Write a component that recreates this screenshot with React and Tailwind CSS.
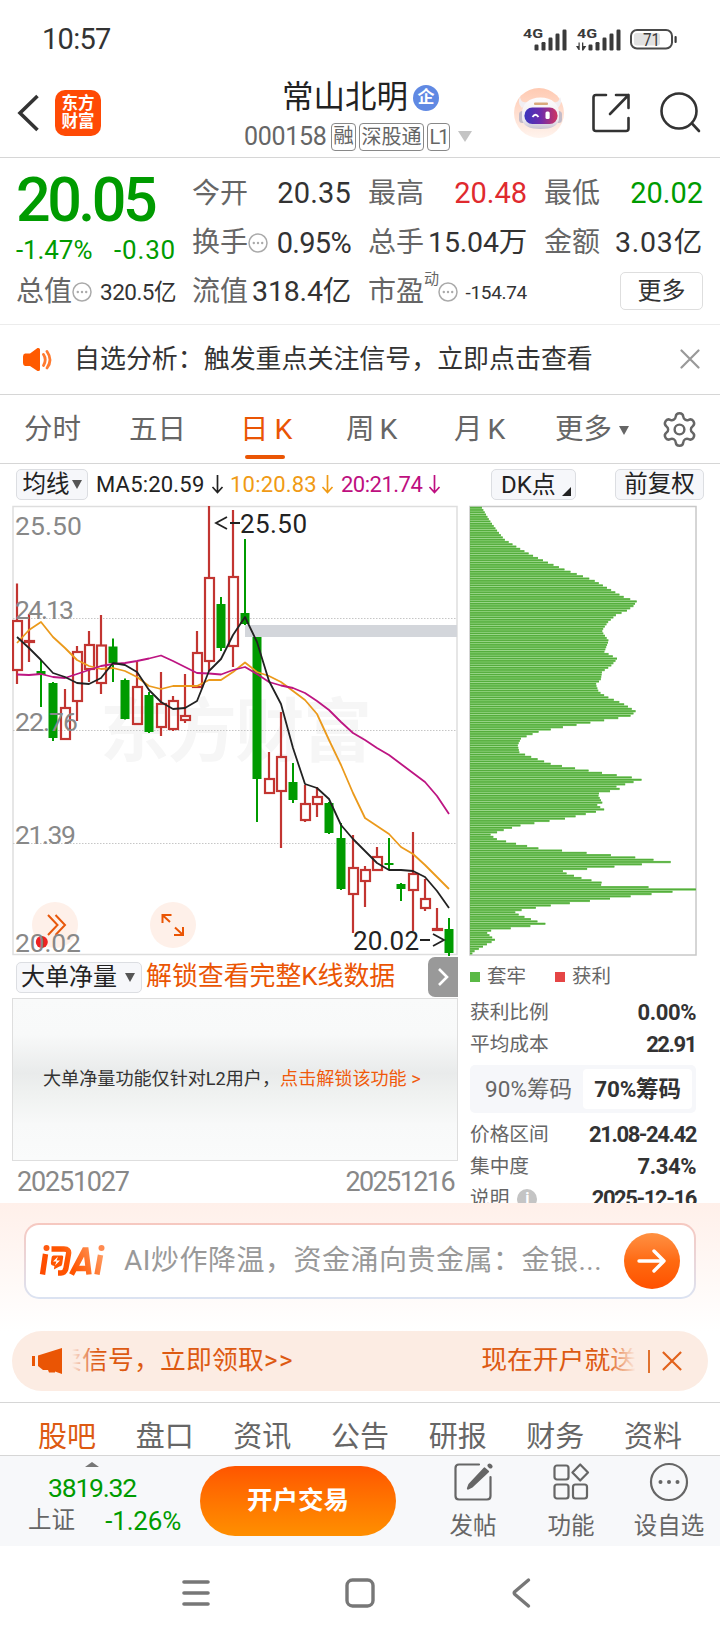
import React from 'react';
import { Settings } from 'lucide-react';

const RED = '#c23531';
const GREEN = '#009b00';

// [kind, high, top, bottom, low], one candle every 12px
const candles = [
  ['r', 583.5, 621, 670, 684], ['r', 614, 641, 642, 662], ['g', 660, 671, 675, 707],
  ['g', 682, 683, 738, 741], ['r', 689, 708, 739, 739], ['r', 646, 652, 701, 721],
  ['r', 631, 645, 669, 682], ['r', 615, 645.5, 683, 694], ['g', 638.5, 646.5, 663, 682],
  ['g', 678.5, 680, 719, 719.5], ['r', 662, 687, 724, 724], ['g', 692, 695, 732, 733],
  ['r', 672, 704, 727, 736], ['r', 696, 701, 729, 731], ['r', 674, 716, 720, 723],
  ['r', 631, 653, 687, 687], ['r', 506, 578, 661, 671], ['g', 597, 604, 648, 651],
  ['r', 510, 577, 646, 667], ['g', 539, 613, 624, 625], ['g', 637, 637, 779, 822],
  ['r', 752, 779, 793, 793], ['r', 712, 757, 791, 848], ['g', 763, 782, 800, 803],
  ['r', 785, 804, 820, 822], ['r', 787, 797, 804, 817], ['g', 802, 803, 833, 834],
  ['g', 823, 838, 889, 890], ['r', 835, 868, 894, 933], ['r', 866, 870, 881, 907],
  ['r', 847, 857, 870, 870], ['g', 838, 863, 865, 870], ['g', 883, 884, 889, 901],
  ['r', 832, 874, 890, 931], ['r', 879, 899, 908, 911], ['r', 908, 929, 930, 930],
  ['g', 918, 929, 953, 956],
];

const ma5 = [637, 648, 660, 673, 677, 683, 684, 678, 663, 665, 672, 690, 702, 709, 708, 701, 671, 659, 635, 617, 642, 681, 704, 748, 784, 788, 799, 825, 839, 851, 863, 870, 870, 871, 877, 891, 908];
const ma10 = [643, 630, 622, 637, 648, 660, 666, 669, 668, 671, 677, 686, 689, 686, 686, 686, 680, 680, 672, 662.5, 672, 676, 682, 691, 700, 714, 740, 765, 793, 818, 826, 834, 847, 854, 865, 877, 889];
const ma20 = [674.5, 675, 674, 677, 678, 674, 670, 666, 664, 663, 661, 658.5, 655.5, 661, 667, 673, 673.5, 674.5, 670, 667, 674, 682, 685.5, 688, 693, 701, 710, 722, 733, 740, 748, 755, 764, 773, 782, 796, 814];

const toPoints = (values) => values.map((y, i) => `${17 + i * 12},${y}`).join(' ');

// chip distribution outline: [offset, extent]
const chips = [
  [20, 64], [60, 88], [90, 110], [118, 133], [145, 178], [165, 215], [188, 265], [210, 318], [240, 400], [258, 432],
  [290, 490], [304, 530], [318, 520], [332, 500], [345, 468], [365, 445], [385, 430], [395, 426], [422, 446], [455, 433],
  [476, 472], [498, 452], [515, 426], [540, 422], [552, 407], [575, 416], [590, 440], [610, 488], [634, 528], [648, 510],
  [660, 436], [680, 315], [695, 235], [715, 183], [735, 173], [757, 178], [772, 218], [792, 275], [800, 318], [820, 436],
  [832, 515], [839, 545], [853, 494], [860, 467], [867, 480], [881, 412], [908, 427], [915, 410], [929, 434], [942, 376],
  [955, 318], [965, 250], [975, 185], [990, 130], [1004, 90], [1018, 112], [1032, 173], [1045, 237], [1059, 387],
  [1073, 536], [1086, 634], [1093, 540], [1107, 373], [1114, 300], [1134, 365], [1148, 427], [1154, 417], [1161, 562],
  [1168, 708], [1175, 636], [1182, 572], [1189, 508], [1196, 445], [1210, 322], [1217, 264], [1230, 183], [1238, 162],
  [1251, 195], [1265, 235], [1272, 260], [1279, 200], [1286, 140], [1293, 80], [1300, 82], [1320, 106], [1333, 80],
  [1340, 68], [1354, 42], [1368, 30],
];

const chipBars = Array.from({ length: 196 }, (_, i) => {
  const y = 22.9 + i * 6.857;
  const n = Math.max(1, chips.findIndex((c) => c[0] >= y));
  const [y0, x0] = chips[n - 1];
  const [y1, x1] = chips[n];
  return { y: y / 3, width: (x0 + ((x1 - x0) * (y - y0)) / (y1 - y0) - 30) / 3 };
});

const StatusBar = () => (
  <div className="flex h-[78px] items-center justify-between pl-[42px] pr-[42px]">
    <span className="text-[29px] leading-none tracking-[-0.700px] text-[#333]">10:57</span>
    <svg width="155" height="28" viewBox="523 24 155 28" fill="#3a3a3a">
      <text x="523" y="36.500" fontSize="13.500" fontWeight="700" textLength="20" lengthAdjust="spacingAndGlyphs">4G</text>
      <text x="577" y="36.500" fontSize="13.500" fontWeight="700" textLength="20" lengthAdjust="spacingAndGlyphs">4G</text>
      {[0, 54].map((dx) => (
        <g key={dx}>
          {[6, 8.5, 13, 17, 21].map((h, i) => (
            <rect key={h} x={534.5 + dx + i * 7} y={49.5 - h} width="4" height={h} rx="1.2" />
          ))}
        </g>
      ))}
      <path d="M576 45h2.500v-3.500h1.200v7.500h-1.200zM582 41.500h1.300V45h3l-3 4.500h-1.300z" />
      <rect x="631" y="29" width="41" height="18.500" rx="6" fill="none" stroke="#4a4a4a" strokeWidth="2" />
      <rect x="634" y="32" width="26" height="12.500" rx="2.500" fill="#e2e2e2" />
      <rect x="674.500" y="35" width="2.200" height="7" rx="1" />
      <text x="643" y="45" fontSize="18.500" textLength="17" lengthAdjust="spacingAndGlyphs">71</text>
    </svg>
  </div>
);

const Header = () => (
  <header className="flex h-[80px] border-b border-[#d6d6d6]">
    <div className="flex w-[235px] gap-4 pl-[17px] pt-[12px]">
      <svg width="23" height="46" viewBox="0 0 23 46" fill="none" stroke="#333" strokeWidth="3.600">
        <path d="M20.500 6L3 23l17.500 17" />
      </svg>
      <div className="-ml-px flex h-[46px] w-[46px] flex-col items-center justify-center rounded-[10px] bg-[#ff4a05] text-[16.500px] font-bold leading-[18.500px] text-white">
        <span>东方</span>
        <span>财富</span>
      </div>
    </div>
    <div className="flex w-[252px] flex-col">
      <div className="flex h-[39px] items-center">
        <h1 className="ml-[47px] text-[31.500px] leading-none text-[#222]">常山北明</h1>
        <span className="ml-[5px] flex h-[26px] w-[26px] items-center justify-center rounded-full bg-[#6089e3] text-[17px] font-bold leading-none text-white">
          企
        </span>
      </div>
      <div className="flex h-[39px] items-center pl-[9px] text-[#666]">
        <span className="w-[87px] text-[25px] leading-none tracking-[-0.300px]">000158</span>
        <span className="flex h-[28px] w-[25px] items-center justify-center rounded-[4px] border-[1.500px] border-[#888] text-[20.500px] leading-none">融</span>
        <span className="ml-[3px] flex h-[28px] w-[65px] items-center justify-center rounded-[4px] border-[1.500px] border-[#888] text-[20px] leading-none">深股通</span>
        <span className="ml-[3px] flex h-[28px] w-[23px] items-center justify-center rounded-[4px] border-[1.500px] border-[#888] text-[20px] leading-none tracking-[-2px]">L1</span>
        <svg className="ml-[8px]" width="14" height="11" viewBox="0 0 14 11" fill="#c4c4c4">
          <path d="M0 0h14L7 11z" />
        </svg>
      </div>
    </div>
    <svg className="ml-[23px] mt-[6px]" width="198" height="56" viewBox="510 84 198 56" fill="none">
      <defs>
        <linearGradient id="halo" x1="0" y1="0" x2="0" y2="1">
          <stop offset="0" stopColor="#ffcab2" />
          <stop offset=".6" stopColor="#ffe2d5" />
          <stop offset="1" stopColor="#fff4ee" />
        </linearGradient>
        <linearGradient id="shell" x1="0" y1="0" x2="0" y2="1">
          <stop offset="0" stopColor="#fdfcfd" />
          <stop offset=".7" stopColor="#eeebf0" />
          <stop offset="1" stopColor="#c9c2d2" />
        </linearGradient>
        <linearGradient id="visor" x1="0" y1="0" x2="1" y2="0">
          <stop offset="0" stopColor="#3a35bd" />
          <stop offset=".5" stopColor="#6f2bab" />
          <stop offset="1" stopColor="#cf3560" />
        </linearGradient>
      </defs>
      <circle cx="539" cy="113" r="25" fill="url(#halo)" />
      <path d="M522 108c-3-3-4-7-2-11 1 5 4 6 8 5zM558 108c3-3 4-7 2-11-1 5-4 6-8 5z" fill="#f1eef2" />
      <rect x="519" y="111" width="7" height="12" rx="3.500" fill="#c3bcc9" />
      <rect x="555" y="111" width="7" height="12" rx="3.500" fill="#c3bcc9" />
      <path d="M522 113c0-9 7-15.500 18.500-15.500S559 104 559 113v5c0 8-8 11-18.500 11S522 126 522 118z" fill="url(#shell)" />
      <rect x="534" y="102.500" width="14" height="2.600" rx="1" fill="#d9a97c" />
      <rect x="524.500" y="107.500" width="33" height="16.500" rx="7.800" fill="url(#visor)" />
      <path d="M532.500 117q3-4.500 6 0" stroke="#fff" strokeWidth="1.800" />
      <rect x="545.500" y="111.500" width="4.200" height="7.500" rx="1.500" fill="#fff" />
      <g stroke="#333" strokeWidth="2.600" strokeLinecap="round" strokeLinejoin="round">
        <path d="M606 95h-10q-2.500 0-2.500 2.500v31q0 2.500 2.500 2.500h30q2.500 0 2.500-2.500v-10.500" />
        <path d="M616 95h12.500v13M628.500 95L610 114" />
        <circle cx="679" cy="111" r="17.500" />
        <path d="M692 123.500l7 7.500" />
      </g>
    </svg>
  </header>
);

const Dots = () => (
  <svg width="20" height="20" viewBox="0 0 20 20" className="shrink-0" fill="#aaa">
    <circle cx="10" cy="10" r="9" fill="none" stroke="#aaa" strokeWidth="1.500" />
    <circle cx="5.800" cy="10" r="1.200" />
    <circle cx="10" cy="10" r="1.200" />
    <circle cx="14.200" cy="10" r="1.200" />
  </svg>
);

const Quote = () => (
  <section className="flex h-[167px] border-b border-[#ececec] pl-[16px] pr-[16px] pt-[11px] text-[28px] leading-none whitespace-nowrap text-[#666]">
    <div className="flex w-[160px] flex-col">
      <div className="flex h-[62px] items-center text-[61px] font-medium tracking-[-3.500px] text-[#009b00]">20.05</div>
      <div className="flex h-[38px] items-center justify-between text-[26px] text-[#009b00]">
        <span className="tracking-[-0.100px]">-1.47%</span>
        <span className="tracking-[0.800px]">-0.30</span>
      </div>
      <div className="mt-[3px] flex h-[40px] items-center">
        <span>总值</span>
        <Dots />
        <span className="ml-auto text-[22.500px] tracking-[-0.500px] text-[#333]">320.5亿</span>
      </div>
    </div>
    <div className="ml-[16px] flex w-[159px] flex-col">
      <div className="flex h-[49px] items-center justify-between">
        <span>今开</span>
        <span className="text-[29px] tracking-[0.200px] text-[#333]">20.35</span>
      </div>
      <div className="flex h-[50px] items-center">
        <span>换手</span>
        <Dots />
        <span className="ml-auto text-[29px] tracking-[-0.700px] text-[#333]">0.95%</span>
      </div>
      <div className="flex h-[48px] items-center justify-between">
        <span>流值</span>
        <span className="text-[28.500px] tracking-[-0.200px] text-[#333]">318.4亿</span>
      </div>
    </div>
    <div className="ml-[17px] flex w-[159px] flex-col">
      <div className="flex h-[49px] items-center justify-between">
        <span>最高</span>
        <span className="text-[29px] text-[#e02a2e]">20.48</span>
      </div>
      <div className="flex h-[50px] items-center justify-between">
        <span>总手</span>
        <span className="text-[28.500px] tracking-[-0.200px] text-[#333]">15.04万</span>
      </div>
      <div className="flex h-[48px] items-center">
        <span>市盈</span>
        <span className="-mr-[1px] mb-[26px] text-[15px]">动</span>
        <Dots />
        <span className="ml-auto text-[19px] tracking-[-0.300px] text-[#333]">-154.74</span>
      </div>
    </div>
    <div className="ml-[17px] flex w-[159px] flex-col">
      <div className="flex h-[49px] items-center justify-between">
        <span>最低</span>
        <span className="text-[29px] text-[#009b00]">20.02</span>
      </div>
      <div className="flex h-[50px] items-center justify-between">
        <span>金额</span>
        <span className="text-[28.500px] tracking-[0.800px] text-[#333]">3.03亿</span>
      </div>
      <button className="ml-auto mt-[4px] h-[38px] w-[83px] rounded-[5px] border border-[#dedede] text-[24px] leading-none text-[#333]">更多</button>
    </div>
  </section>
);

const Notice = () => (
  <section className="flex h-[70px] items-center border-b border-[#d6d6d6] pl-[22px] pr-[20px]">
    <svg width="32" height="28" viewBox="0 0 32 28" fill="#ff5a00">
      <path d="M3 7.500h5L15.500 2q2.500-.5 2.500 1.500v20q0 2-2.500 1.500L8 20H3q-2-.5-2-3v-6.500q0-2.500 2-3z" />
      <path d="M21.500 8.500q3.500 5 0 11M25 5.500q6 8.500 0 16.500" fill="none" stroke="#ff7a30" strokeWidth="2.800" strokeLinecap="round" />
    </svg>
    <p className="ml-[20px] text-[25.950px] leading-none text-[#333]">自选分析：触发重点关注信号，立即点击查看</p>
    <svg className="mb-[2px] ml-auto" width="20" height="20" viewBox="0 0 20 20" stroke="#999" strokeWidth="2.200" strokeLinecap="round">
      <path d="M1.500 1.500l17 17M18.500 1.500l-17 17" />
    </svg>
  </section>
);

const PeriodTabs = () => (
  <nav className="flex h-[69px] items-center border-b border-[#d6d6d6] pt-[2px] text-[28.500px] leading-none text-[#666]">
    <span className="ml-[24px] w-[105px]">分时</span>
    <span className="w-[111px]">五日</span>
    <span className="relative flex w-[106px] gap-[6px] text-[#ea5504]">
      日<span>K</span>
      <i className="absolute -bottom-[15px] left-[5px] h-[4px] w-[40px] rounded-full bg-[#ea5504]" />
    </span>
    <span className="flex w-[108px] gap-[5px]">周<span>K</span></span>
    <span className="flex w-[101px] gap-[5px]">月<span>K</span></span>
    <span>更多</span>
    <svg className="ml-[7px]" width="10" height="9" viewBox="0 0 10 9" fill="#666">
      <path d="M0 0h10L5 9z" />
    </svg>
    <Settings className="mb-[2px] ml-[31px]" size={39} strokeWidth={1.5} />
  </nav>
);

const Down = () => (
  <svg className="shrink-0" width="13" height="19" viewBox="0 0 13 19" fill="none" stroke="currentColor" strokeWidth="1.700">
    <path d="M6.500 0v17.500M1.500 12l5 5.500 5-5.500" />
  </svg>
);

const IndicatorBar = () => (
  <div className="flex h-[41px] items-center pl-[16px] pr-[16px] text-[22px] leading-none text-[#222]">
    <button className="flex h-[31px] w-[72px] shrink-0 items-center justify-center rounded-[5px] border border-[#dcdee2] bg-[#f6f7fa] text-[23.500px] leading-none">
      均线
      <svg className="ml-[2px]" width="10" height="9" viewBox="0 0 10 9" fill="#555">
        <path d="M0 0h10L5 9z" />
      </svg>
    </button>
    <span className="ml-[8px] flex w-[128px] items-center justify-between tracking-[0.200px]">MA5:20.59<Down /></span>
    <span className="ml-[6px] flex w-[104px] items-center justify-between tracking-[0.200px] text-[#f09a14]">10:20.83<Down /></span>
    <span className="ml-[7px] flex w-[100px] items-center justify-between tracking-[-0.500px] text-[#be0f80]">20:21.74<Down /></span>
    <button className="ml-auto flex h-[31px] w-[85px] shrink-0 items-center rounded-[5px] border border-[#dcdee2] bg-[#f6f7fa] pl-[9px] text-[24px] leading-none">
      DK点
      <svg className="ml-[6px] mt-[13px]" width="9" height="9" viewBox="0 0 9 9" fill="#222">
        <path d="M9 0v9H0z" />
      </svg>
    </button>
    <button className="ml-[39px] h-[31px] w-[89px] shrink-0 rounded-[5px] border border-[#dcdee2] bg-[#f6f7fa] text-[23.500px] leading-none">前复权</button>
  </div>
);

const KLineChart = () => (
  <svg width="447" height="451" viewBox="12 505 447 451" className="block" fill="none">
    <rect x="13" y="506.500" width="444" height="448" stroke="#dedede" strokeWidth="1.500" />
    <text x="100" y="756" fontSize="69" fontWeight="700" fill="#f6f6f6" textLength="272">东方财富</text>
    {[618.5, 730.5, 843.5].map((y) => (
      <path key={y} d={`M13 ${y}H457`} stroke="#c6c6c6" strokeDasharray="1.500 1.500" />
    ))}
    <circle cx="55" cy="925" r="23" fill="#fef0e9" />
    <circle cx="173" cy="925" r="23" fill="#fef0e9" />
    <path d="M48 915l9.500 10-9.500 10M55.500 915l9.500 10-9.500 10" stroke="#e8580c" strokeWidth="2" />
    <path d="M162.500 923v-8h9M163 915.500l7 6.500M175 927.500l7.500 7M183 927v8h-9" stroke="#ea5504" strokeWidth="2" />
    <circle cx="41.800" cy="942" r="6" fill="#ee2222" />
    <rect x="245" y="625" width="212" height="12" fill="#d3d6db" />
    {candles.map(([kind, high, top, bottom, low], i) => {
      const x = 17 + i * 12;
      if (kind === 'g') {
        return (
          <g key={i} fill={GREEN}>
            <rect x={x - 1} y={high} width="2" height={low - high} />
            <rect x={x - 4.5} y={top} width="9" height={Math.max(2, bottom - top)} />
          </g>
        );
      }
      return (
        <g key={i} stroke={RED} strokeWidth="2.200">
          <path d={`M${x} ${high}V${top}M${x} ${bottom}V${low}`} />
          <rect x={x - 4} y={top} width="9" height={bottom - top} />
        </g>
      );
    })}
    <g strokeWidth="1.800" strokeLinejoin="round">
      <polyline points={toPoints(ma10)} stroke="#eb9a1c" />
      <polyline points={toPoints(ma20)} stroke="#bd1582" />
      <polyline points={toPoints(ma5)} stroke="#222" />
    </g>
    <g fill="#888" fontSize="26.500">
      <text x="15" y="534.500" textLength="67">25.50</text>
      <text x="15" y="619" textLength="59">24.13</text>
      <text x="15" y="731" textLength="63">22.76</text>
      <text x="15" y="844" textLength="61">21.39</text>
      <text x="15" y="952" textLength="66">20.02</text>
    </g>
    <g fill="#222" fontSize="26">
      <text x="240" y="533" textLength="67">25.50</text>
      <text x="353" y="950" textLength="66">20.02</text>
    </g>
    <path d="M227 517l-11 6 11 6M230 523h10M420 940h10M433 934l11 6-11 6" stroke="#222" strokeWidth="1.800" />
  </svg>
);

const ChipChart = () => (
  <svg width="228" height="451" viewBox="469 505 228 451" className="block" fill="none">
    <rect x="470" y="506.500" width="226" height="448.500" stroke="#c8c8c8" strokeWidth="1.500" />
    {chipBars.map((bar, i) => (
      <g key={i}>
        <rect x="470" y={499 + bar.y} width={bar.width} height="2.300" fill="#80cc6c" />
        <rect x="470" y={499.4 + bar.y} width={bar.width} height="1.300" fill="#54ad3c" />
      </g>
    ))}
  </svg>
);

const StatRow = ({ label, value }) => (
  <div className="flex h-[32px] items-center justify-between">
    <span className="flex items-center gap-[8px] text-[19.700px]">{label}</span>
    <span className={value.endsWith('%') ? 'text-[22px] font-bold tracking-[-0.400px] text-[#333]' : 'text-[22px] font-bold tracking-[-1.400px] text-[#333]'}>
      {value}
    </span>
  </div>
);

const ChartSection = () => (
  <section className="flex h-[698px] overflow-hidden pl-[12px]">
    <div className="w-[446px] shrink-0">
      <KLineChart />
      <div className="flex h-[42px] items-center pl-[4px]">
        <button className="flex h-[31px] w-[126px] items-center rounded-[5px] border border-[#dcdee2] bg-[#f6f7fa] pl-[4px] text-[24px] leading-none text-[#222]">
          大单净量
          <svg className="ml-[8px]" width="10" height="9" viewBox="0 0 10 9" fill="#555">
            <path d="M0 0h10L5 9z" />
          </svg>
        </button>
        <span className="ml-[4px] text-[25.900px] leading-none text-[#ea5504]">解锁查看完整K线数据</span>
        <span className="ml-auto flex h-[40px] w-[30px] items-center justify-center rounded-l-[7px] bg-[#999]">
          <svg width="12" height="18" viewBox="0 0 12 18" fill="none" stroke="#fff" strokeWidth="2.600">
            <path d="M2 1l8 8-8 8" />
          </svg>
        </span>
      </div>
      <div className="flex h-[163px] items-center border border-[#dedede] bg-[linear-gradient(#f9fafa_0%,#f8f9f9_22%,#e9ebeb_46%,#eff1f0_58%,#f8f9f9_78%,#fafbfb_100%)] pl-[30px] text-[18.100px] leading-none text-[#333]">
        <span>大单净量功能仅针对L2用户，</span>
        <span className="text-[#f05a0c]">点击解锁该功能 &gt;</span>
      </div>
      <div className="flex h-[43px] items-center justify-between pl-[5px] pr-[4px] text-[27px] leading-none tracking-[-1.200px] text-[#888]">
        <span>20251027</span>
        <span className="tracking-[-1.600px]">20251216</span>
      </div>
    </div>
    <div className="ml-[11px] w-[228px] shrink-0 leading-none text-[#666]">
      <ChipChart />
      <div className="ml-[1px] w-[226px]">
        <div className="flex h-[42px] items-center text-[19.500px]">
          <i className="mr-[7px] h-[10px] w-[10px] bg-[#5ab945]" />
          套牢
          <i className="ml-[29px] mr-[7px] h-[10px] w-[10px] bg-[#e54545]" />
          获利
        </div>
        <div className="-mt-px">
          <StatRow label="获利比例" value="0.00%" />
          <StatRow label="平均成本" value="22.91" />
        </div>
        <div className="my-[4px] flex h-[48px] rounded-[5px] bg-[#f6f7fa] p-[4px] text-[22.500px]">
          <span className="flex flex-1 items-center justify-center">90%筹码</span>
          <span className="flex w-[109px] items-center justify-center rounded-[4px] bg-white font-bold tracking-[-0.200px] text-[#333]">70%筹码</span>
        </div>
        <div className="mt-[6px]">
          <StatRow label="价格区间" value="21.08-24.42" />
          <StatRow label="集中度" value="7.34%" />
          <StatRow
            label={
              <>
                说明
                <i className="flex h-[20px] w-[20px] items-center justify-center rounded-full bg-[#c4c4c4] text-[16px] font-bold not-italic text-white">i</i>
              </>
            }
            value="2025-12-16"
          />
        </div>
      </div>
    </div>
  </section>
);

const AskBar = () => (
  <section className="h-[128px] bg-linear-to-b from-[#fff0ea] to-white px-[24px] pt-[20px]">
    <div className="rounded-[15px] bg-linear-to-b from-[#f6c8c0] to-[#dbe3f2] p-[2px]">
      <div className="flex h-[72px] items-center rounded-[13px] bg-white pl-[13px] pr-[14px] whitespace-nowrap">
        <svg width="66" height="38" viewBox="0 0 66 38" fill="none" stroke="url(#ask)" strokeWidth="5.400">
          <defs>
            <linearGradient id="ask" gradientUnits="userSpaceOnUse" x1="0" y1="34" x2="55" y2="0">
              <stop offset="0" stopColor="#ff4a00" />
              <stop offset=".5" stopColor="#ff5500" />
              <stop offset="1" stopColor="#ff9a60" />
            </linearGradient>
          </defs>
          <path d="M6.500 12L3.500 32.500M12.500 7H25q5.500 0 4.500 5l-2.500 14q-1 5-5 5h-3" />
          <circle cx="7.500" cy="6" r="3" fill="#ff5a10" stroke="none" />
          <path d="M12 13.500h11q1.500 0 1.200 1.500l-1 7q-.4 2.500-2.800 2.500l-5.500 3 .5-3.500q-4-.5-3.500-3.500l.8-5.500q.2-1.500 1.800-1.500z" fill="#ff5500" stroke="none" />
          <path d="M19 14.500l-5 5h3.500l-1.500 4 5-5h-3.500z" fill="#fff" stroke="none" />
          <path d="M32.500 32.500L45.500 8h1.500L50 32.500M37 26.500h12" />
          <path d="M61.500 13L58 32.500" />
          <circle cx="62.500" cy="6" r="3" fill="#ff8a50" stroke="none" />
        </svg>
        <span className="ml-[19px] text-[28px] leading-none tracking-[0.500px] text-[#999]">AI炒作降温，资金涌向贵金属：金银...</span>
        <span className="ml-auto flex h-[56px] w-[56px] shrink-0 items-center justify-center rounded-full bg-linear-to-b from-[#ff9040] via-[#ff6a10] to-[#ff5000]">
          <svg width="30" height="26" viewBox="0 0 30 26" fill="none" stroke="#fff" strokeWidth="3.400" strokeLinecap="round" strokeLinejoin="round">
            <path d="M2 13h25M17 3l10 10-10 10" />
          </svg>
        </span>
      </div>
    </div>
  </section>
);

const Banner = () => (
  <section className="mx-[12px] flex h-[60px] items-center rounded-full bg-[#fcece3] pl-[20px] pr-[24px] text-[25.800px] leading-none text-[#dd5a12]">
    <svg width="31" height="28" viewBox="0 0 31 28" fill="#ea5504">
      <path d="M0 9h3v10H0zM6 8.500L30 1v26l-7-2.500v1h-6l-1-2.500H11L6 19z" />
    </svg>
    <div className="relative ml-[9px] flex w-[564px] justify-between overflow-hidden">
      <span className="-ml-[16px] tracking-[0.200px]">卖信号，立即领取<span className="tracking-[1.500px]">&gt;&gt;</span></span>
      <span>现在开户就送</span>
      <i className="absolute inset-y-0 left-0 w-[24px] bg-linear-to-r from-[#fcece3] to-transparent" />
      <i className="absolute inset-y-0 right-0 w-[30px] bg-linear-to-l from-[#fcece3] to-transparent" />
    </div>
    <i className="ml-[12px] h-[23px] w-[2px] bg-[#e0722f]" />
    <svg className="ml-auto mr-[2px]" width="20" height="20" viewBox="0 0 22 22" stroke="#e2621c" strokeWidth="2.400">
      <path d="M1 1l20 20M21 1L1 21" />
    </svg>
  </section>
);

const infoTabs = ['股吧', '盘口', '资讯', '公告', '研报', '财务', '资料'];

const InfoTabs = () => (
  <nav className="mt-[11px] flex h-[54px] justify-between border-y border-[#d6d6d6] pl-[38px] pr-[38px] pt-[20px] text-[29px] leading-none text-[#666]">
    {infoTabs.map((tab, i) => (
      <span key={tab} className={i === 0 ? 'text-[#dd5a12]' : ''}>{tab}</span>
    ))}
  </nav>
);

const Action = ({ label, children }) => (
  <div className="flex w-[98px] flex-col items-center">
    <svg width="40" height="40" viewBox="0 0 40 40" fill="none" stroke="#666" strokeWidth="2.200" strokeLinecap="round" strokeLinejoin="round">
      {children}
    </svg>
    <span className="mt-[13px] text-[23.500px] leading-none text-[#666]">{label}</span>
  </div>
);

const BottomBar = () => (
  <footer className="flex h-[90px] bg-[#f7f8fa]">
    <div className="w-[200px] pl-[28px]">
      <svg className="ml-[57px] mt-[6px]" width="14" height="5" viewBox="0 0 14 5" fill="#777">
        <path d="M7 0l7 5H0z" />
      </svg>
      <div className="ml-[20px] mt-[8px] text-[26.500px] leading-none tracking-[-1.200px] text-[#009b00]">3819.32</div>
      <div className="mt-[6px] flex w-[153px] items-center justify-between leading-none">
        <span className="text-[23.500px] text-[#666]">上证</span>
        <span className="text-[26px] tracking-[-0.200px] text-[#009b00]">-1.26%</span>
      </div>
    </div>
    <button className="mt-[10px] h-[70px] w-[196px] rounded-full bg-linear-to-b from-[#ff5500] to-[#ff8f00] text-[25.500px] font-bold leading-none text-white">开户交易</button>
    <div className="ml-[28px] flex pt-[6px]">
      <Action label="发帖">
        <path d="M26 2.500H6q-3.500 0-3.500 3.500v28q0 3.500 3.500 3.500h28q3.500 0 3.500-3.500V15" />
        <path d="M31.500 6.500l3.500 3L19 24.500l-4 2 1.500-4z" fill="#666" />
        <path d="M36.500 3.500l1 1" strokeWidth="4" />
      </Action>
      <Action label="功能">
        <rect x="3.500" y="3.500" width="14" height="14" rx="2.500" />
        <rect x="3.500" y="22.500" width="14" height="14" rx="2.500" />
        <rect x="22" y="22.500" width="14" height="14" rx="2.500" />
        <path d="M29.200 2.500l7.800 8-7.800 8-7.800-8z" />
      </Action>
      <Action label="设自选">
        <circle cx="20" cy="20" r="18" />
        <g fill="#666" stroke="none">
          <circle cx="11.500" cy="20" r="2" />
          <circle cx="20" cy="20" r="2" />
          <circle cx="28.500" cy="20" r="2" />
        </g>
      </Action>
    </div>
  </footer>
);

const SystemNav = () => (
  <div className="flex h-[94px] items-center justify-between pl-[182px] pr-[188px]">
    <svg width="28" height="30" viewBox="0 0 28 30" stroke="#777" strokeWidth="3.600" strokeLinecap="round">
      <path d="M2 4h24M2 15h24M2 26h24" />
    </svg>
    <svg width="32" height="32" viewBox="0 0 32 32" fill="none" stroke="#777" strokeWidth="3.400">
      <rect x="3" y="3" width="26" height="26" rx="5.500" />
    </svg>
    <svg width="22" height="32" viewBox="0 0 22 32" fill="none" stroke="#777" strokeWidth="3.400" strokeLinecap="round" strokeLinejoin="round">
      <path d="M18.500 3L5 14.500q-1.500 1.500 0 3L18.500 29" />
    </svg>
  </div>
);

const App = () => (
  <main className="h-[1640px] w-[720px] overflow-hidden bg-white font-['Roboto','Noto_Sans_CJK_SC',sans-serif]">
    <StatusBar />
    <Header />
    <Quote />
    <Notice />
    <PeriodTabs />
    <IndicatorBar />
    <ChartSection />
    <AskBar />
    <Banner />
    <InfoTabs />
    <BottomBar />
    <SystemNav />
  </main>
);

export default App;
